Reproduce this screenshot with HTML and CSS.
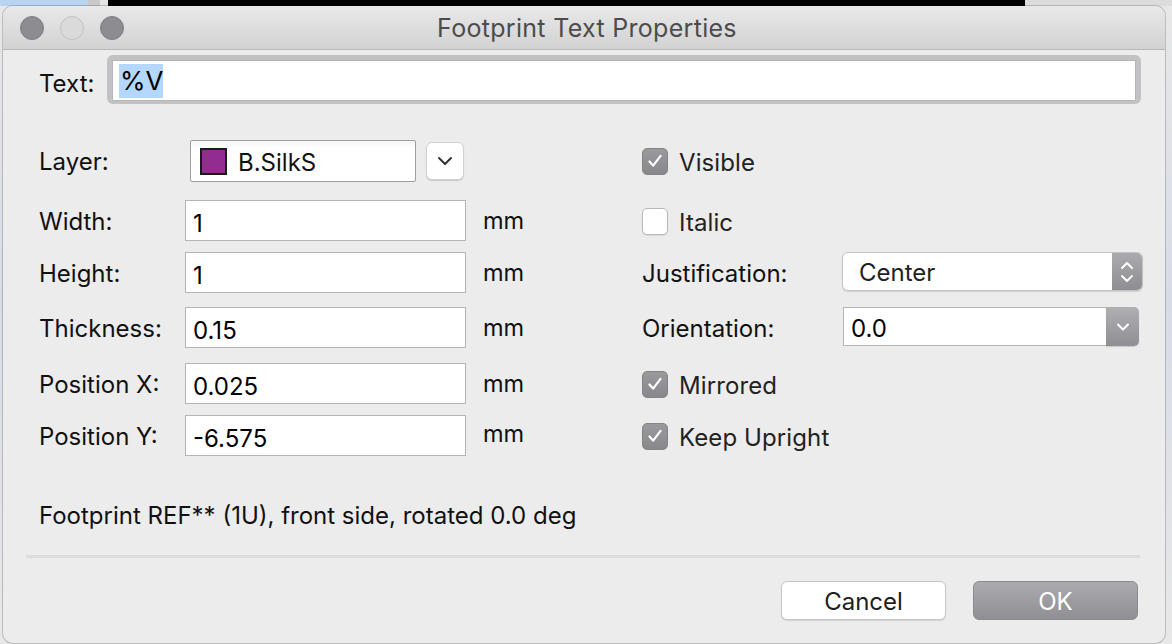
FILE: index.html
```html
<!DOCTYPE html>
<html>
<head>
<meta charset="utf-8">
<link rel="stylesheet" href="styles.css">
</head>
<body>
<div class="desktop">
  <div class="window">
    <div class="titlebar">
      <div class="lights">
        <span class="light dark"></span>
        <span class="light pale"></span>
        <span class="light dark"></span>
      </div>
      <div class="title">Footprint Text Properties</div>
    </div>
    <div class="content">
      <div class="text-row">
        <span class="label text-label">Text:</span>
        <div class="focus-ring">
          <div class="text-field"><span class="sel">%V</span></div>
        </div>
      </div>

      <div class="form">
        <span class="label">Layer:</span>
        <div class="layer-cell">
          <div class="layer-box"><span class="swatch"></span><span>B.SilkS</span></div>
          <div class="drop-btn">
            <svg width="16" height="10" viewBox="0 0 16 10"><path d="M2 2 L8 8 L14 2" fill="none" stroke="#333" stroke-width="2" stroke-linecap="round" stroke-linejoin="round"/></svg>
          </div>
        </div>
        <span></span>
        <div class="check-cell">
          <span class="check on"><svg width="26" height="26" viewBox="0 0 26 26"><path d="M7 13.5 L11 18 L19 7.5" fill="none" stroke="#fff" stroke-width="2.4" stroke-linecap="round" stroke-linejoin="round"/></svg></span>
          <span class="check-label">Visible</span>
        </div>

        <span class="label">Width:</span>
        <div class="input">1</div>
        <span class="unit">mm</span>
        <div class="check-cell">
          <span class="check off"></span>
          <span class="check-label">Italic</span>
        </div>

        <span class="label">Height:</span>
        <div class="input">1</div>
        <span class="unit">mm</span>
        <span class="label rlabel">Justification:</span>
        <div class="popup">
          <span class="popup-text">Center</span>
          <span class="popup-arrows">
            <svg width="16" height="28" viewBox="0 0 16 28"><path d="M3 10 L8 5 L13 10 M3 18 L8 23 L13 18" fill="none" stroke="#fff" stroke-width="2" stroke-linecap="round" stroke-linejoin="round"/></svg>
          </span>
        </div>

        <span class="label">Thickness:</span>
        <div class="input">0.15</div>
        <span class="unit">mm</span>
        <span class="label rlabel">Orientation:</span>
        <div class="combo">
          <span class="combo-text">0.0</span>
          <span class="combo-btn">
            <svg width="14" height="10" viewBox="0 0 14 10"><path d="M2 2.5 L7 7.5 L12 2.5" fill="none" stroke="#fff" stroke-width="2" stroke-linecap="round" stroke-linejoin="round"/></svg>
          </span>
        </div>

        <span class="label">Position X:</span>
        <div class="input">0.025</div>
        <span class="unit">mm</span>
        <div class="check-cell">
          <span class="check on"><svg width="26" height="26" viewBox="0 0 26 26"><path d="M7 13.5 L11 18 L19 7.5" fill="none" stroke="#fff" stroke-width="2.4" stroke-linecap="round" stroke-linejoin="round"/></svg></span>
          <span class="check-label">Mirrored</span>
        </div>

        <span class="label">Position Y:</span>
        <div class="input">-6.575</div>
        <span class="unit unit-high">mm</span>
        <div class="check-cell">
          <span class="check on"><svg width="26" height="26" viewBox="0 0 26 26"><path d="M7 13.5 L11 18 L19 7.5" fill="none" stroke="#fff" stroke-width="2.4" stroke-linecap="round" stroke-linejoin="round"/></svg></span>
          <span class="check-label">Keep Upright</span>
        </div>
      </div>

      <div class="info">Footprint REF** (1U), front side, rotated 0.0 deg</div>
      <div class="sep"></div>
      <div class="buttons">
        <div class="btn cancel">Cancel</div>
        <div class="btn ok">OK</div>
      </div>
    </div>
  </div>
</div>
</body>
</html>
```

FILE: styles.css
```css
html, body {
  margin: 0;
  padding: 0;
  width: 1172px;
  height: 644px;
  overflow: hidden;
}

body {
  font-family: Inter, "Liberation Sans", Arial, sans-serif;
  background:
    linear-gradient(to right, #b7d4f0 0, #b7d4f0 88px, #c9c9c9 88px, #c9c9c9 100px, #e4e4e4 100px, #e4e4e4 108px, #000 108px, #000 1025px, #dcdcdc 1025px) top left / 100% 6px no-repeat,
    linear-gradient(to bottom, #e8e8e8 0, #d7dbe6 300px, #e8e8e8 644px);
}

.desktop {
  box-sizing: border-box;
  width: 1172px;
  height: 644px;
  padding: 6px 7px 1px 3px;
}

.window {
  width: 100%;
  height: 100%;
  background: #ececec;
  border-radius: 10px;
  overflow: hidden;
  display: flex;
  flex-direction: column;
  box-shadow: 0 0 0 1px rgba(0,0,0,0.18);
}

.titlebar {
  height: 43px;
  flex: none;
  background: linear-gradient(to bottom, #e9e9e9, #d2d2d2);
  border-bottom: 1px solid #b8b8b8;
  display: flex;
  align-items: center;
  position: relative;
}

.lights {
  display: flex;
  gap: 16px;
  padding-left: 17px;
  margin-top: 1px;
}

.light {
  width: 24px;
  height: 24px;
  border-radius: 50%;
  box-sizing: border-box;
}
.light.dark {
  background: #8d8c91;
  border: 1px solid #7d7c81;
}
.light.pale {
  background: #dadada;
  border: 1px solid #c2c2c2;
}

.title {
  position: absolute;
  left: 0;
  right: 0;
  top: 0;
  bottom: 0;
  display: flex;
  align-items: center;
  justify-content: center;
  font-size: 25px;
  letter-spacing: 0.3px;
  color: #4c4c4c;
  padding-left: 6px;
  padding-top: 1px;
}

.content {
  flex: 1;
  padding: 5px 25px 0 36px;
  display: flex;
  flex-direction: column;
}

.label {
  font-size: 24px;
  color: #111;
}

.text-row {
  display: flex;
  align-items: center;
  height: 49px;
}
.text-label {
  width: 68px;
  padding-top: 7px;
}

.focus-ring {
  flex: 1;
  height: 49px;
  box-sizing: border-box;
  background: #c2c2c5;
  border-radius: 6px;
  padding: 5px 5px 3px 5px;
  margin-right: -1px;
}

.text-field {
  height: 100%;
  box-sizing: border-box;
  background: #fff;
  border: 1px solid #b6b6b6;
  display: flex;
  align-items: center;
  padding-left: 6px;
}

.sel {
  background: #b3d7ff;
  font-size: 26px;
  color: #000;
  padding: 3px 0 3px 1px;
  line-height: 28px;
}

.form {
  margin-top: 36px;
  display: grid;
  grid-template-columns: 146px 281px 176px 200px 296px;
  grid-template-rows: 60px 52px 55px 56px 52px 41px;
  align-items: start;
}

.form > .label {
  height: 41px;
  box-sizing: border-box;
  padding-top: 2px;
  display: flex;
  align-items: center;
}

.layer-cell {
  display: flex;
  align-items: center;
  gap: 10px;
  padding-left: 5px;
  height: 42px;
}

.layer-box {
  width: 226px;
  height: 42px;
  box-sizing: border-box;
  background: linear-gradient(to bottom, #f6f6f6, #fff 20%);
  border: 1px solid #9e9e9e;
  border-radius: 2px;
  display: flex;
  align-items: center;
  padding-left: 9px;
  padding-top: 2px;
  gap: 11px;
  font-size: 24px;
  color: #111;
}

.swatch {
  width: 27px;
  height: 27px;
  box-sizing: border-box;
  background: #932c91;
  border: 2px solid #1a1a1a;
  flex: none;
  margin-top: -2px;
}

.drop-btn {
  width: 38px;
  height: 38px;
  box-sizing: border-box;
  background: #fff;
  border: 1px solid #cfcfcf;
  border-radius: 6px;
  box-shadow: 0 1px 1px rgba(0,0,0,0.15);
  display: flex;
  align-items: center;
  justify-content: center;
}

.input {
  width: 281px;
  height: 41px;
  box-sizing: border-box;
  background: #fff;
  border: 1px solid #b4b4b4;
  font-size: 24px;
  color: #000;
  display: flex;
  align-items: center;
  padding: 5px 0 0 7px;
}

.unit {
  font-size: 23.5px;
  color: #111;
  padding-left: 17px;
  height: 41px;
  display: flex;
  align-items: center;
}
.unit-high {
  align-items: flex-start;
  padding-top: 4px;
  box-sizing: border-box;
}

.check-cell {
  display: flex;
  align-items: center;
  gap: 11px;
  height: 42px;
  grid-column: 4 / span 2;
}

.check {
  width: 26px;
  height: 27px;
  box-sizing: border-box;
  border-radius: 5px;
  flex: none;
  display: flex;
  align-items: center;
  justify-content: center;
}
.check.on {
  background: linear-gradient(to bottom, #9a9a9e, #87878c);
  border: 1px solid #848488;
}
.check.off {
  background: #fff;
  border: 1px solid #b8b8b8;
  box-shadow: 0 1px 1px rgba(0,0,0,0.08);
}

.check-label {
  font-size: 24px;
  letter-spacing: 0.1px;
  color: #222;
  padding-top: 3px;
}

.rlabel {
  color: #111;
}

.popup {
  width: 301px;
  height: 39px;
  box-sizing: border-box;
  background: #fff;
  border: 1px solid #c3c3c3;
  border-radius: 6px;
  box-shadow: 0 1px 1px rgba(0,0,0,0.12);
  display: flex;
  overflow: hidden;
}
.popup-text {
  flex: 1;
  font-size: 24px;
  color: #222;
  padding-left: 16px;
  display: flex;
  align-items: center;
  padding-top: 2px;
}
.popup-arrows {
  width: 30px;
  background: linear-gradient(to bottom, #ababaf, #8d8d92);
  display: flex;
  align-items: center;
  justify-content: center;
}

.combo {
  width: 296px;
  height: 39px;
  margin-left: 1px;
  display: flex;
}
.combo-text {
  flex: 1;
  box-sizing: border-box;
  background: #fff;
  border: 1px solid #b4b4b4;
  border-right: none;
  font-size: 24px;
  color: #000;
  padding-left: 7px;
  padding-top: 3px;
  display: flex;
  align-items: center;
}
.combo-btn {
  width: 33px;
  background: linear-gradient(to bottom, #b0b0b4, #8e8e93);
  border-radius: 0 5px 5px 0;
  display: flex;
  align-items: center;
  justify-content: center;
  box-shadow: 0 1px 1px rgba(0,0,0,0.15);
}

.info {
  margin-top: 46px;
  font-size: 24px;
  color: #111;
  line-height: 28px;
}

.sep {
  margin-top: 25px;
  margin-left: -13px;
  height: 3px;
  background: #dcdcdc;
}

.buttons {
  margin-top: 23px;
  display: flex;
  justify-content: flex-end;
  gap: 27px;
  padding-right: 2px;
}

.btn {
  width: 165px;
  height: 39px;
  box-sizing: border-box;
  border-radius: 6px;
  font-size: 24px;
  display: flex;
  align-items: center;
  justify-content: center;
  padding-top: 2px;
}
.btn.cancel {
  background: #fff;
  border: 1px solid #c6c6c6;
  box-shadow: 0 1px 1px rgba(0,0,0,0.12);
  color: #1e1e1e;
}
.btn.ok {
  background: linear-gradient(to bottom, #ababaf, #8f8f94);
  border: 1px solid #8a8a8f;
  color: #fff;
}
```
